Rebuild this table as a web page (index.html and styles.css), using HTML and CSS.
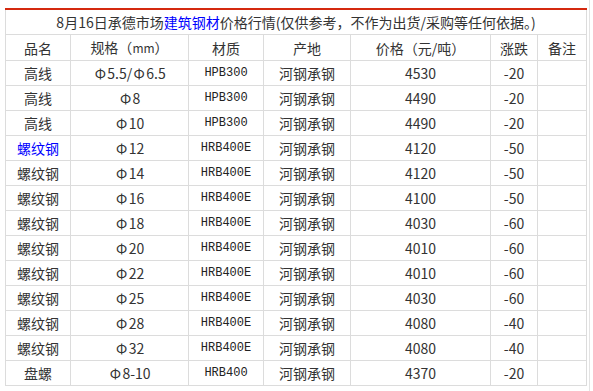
FILE: index.html
```html
<!DOCTYPE html>
<html lang="zh-CN">
<head>
<meta charset="utf-8">
<title>承德市场建筑钢材价格行情</title>
<link rel="stylesheet" href="styles.css">
</head>
<body>
<div class="page">
  <table class="price-table">
    <colgroup>
      <col class="c-name"><col class="c-spec"><col class="c-mat"><col class="c-origin"><col class="c-price"><col class="c-change"><col class="c-note">
    </colgroup>
    <tr class="title-row"><td colspan="7">8月16日承德市场<a class="link" href="#">建筑钢材</a>价格行情(仅供参考，不作为出货/采购等任何依据。)</td></tr>
    <tr><td>品名</td><td>规格（<span class="mm">mm</span>）</td><td>材质</td><td>产地</td><td>价格（元/吨）</td><td>涨跌</td><td>备注</td></tr>
    <tr><td>高线</td><td><span class="phi">Φ</span>5.5/<span class="phi">Φ</span>6.5</td><td class="lat">HPB300</td><td>河钢承钢</td><td>4530</td><td>-20</td><td></td></tr>
    <tr><td>高线</td><td><span class="phi">Φ</span>8</td><td class="lat">HPB300</td><td>河钢承钢</td><td>4490</td><td>-20</td><td></td></tr>
    <tr><td>高线</td><td><span class="phi">Φ</span>10</td><td class="lat">HPB300</td><td>河钢承钢</td><td>4490</td><td>-20</td><td></td></tr>
    <tr><td><a class="link" href="#">螺纹钢</a></td><td><span class="phi">Φ</span>12</td><td class="lat">HRB400E</td><td>河钢承钢</td><td>4120</td><td>-50</td><td></td></tr>
    <tr><td>螺纹钢</td><td><span class="phi">Φ</span>14</td><td class="lat">HRB400E</td><td>河钢承钢</td><td>4120</td><td>-50</td><td></td></tr>
    <tr><td>螺纹钢</td><td><span class="phi">Φ</span>16</td><td class="lat">HRB400E</td><td>河钢承钢</td><td>4100</td><td>-50</td><td></td></tr>
    <tr><td>螺纹钢</td><td><span class="phi">Φ</span>18</td><td class="lat">HRB400E</td><td>河钢承钢</td><td>4030</td><td>-60</td><td></td></tr>
    <tr><td>螺纹钢</td><td><span class="phi">Φ</span>20</td><td class="lat">HRB400E</td><td>河钢承钢</td><td>4010</td><td>-60</td><td></td></tr>
    <tr><td>螺纹钢</td><td><span class="phi">Φ</span>22</td><td class="lat">HRB400E</td><td>河钢承钢</td><td>4010</td><td>-60</td><td></td></tr>
    <tr><td>螺纹钢</td><td><span class="phi">Φ</span>25</td><td class="lat">HRB400E</td><td>河钢承钢</td><td>4030</td><td>-60</td><td></td></tr>
    <tr><td>螺纹钢</td><td><span class="phi">Φ</span>28</td><td class="lat">HRB400E</td><td>河钢承钢</td><td>4080</td><td>-40</td><td></td></tr>
    <tr><td>螺纹钢</td><td><span class="phi">Φ</span>32</td><td class="lat">HRB400E</td><td>河钢承钢</td><td>4080</td><td>-40</td><td></td></tr>
    <tr><td>盘螺</td><td><span class="phi">Φ</span>8-10</td><td class="lat">HRB400</td><td>河钢承钢</td><td>4370</td><td>-20</td><td></td></tr>
  </table>
</div>
</body>
</html>
```
FILE: styles.css
```css
html, body {
  margin: 0;
  padding: 0;
  background: #fff;
}
.page {
  width: 590px;
  height: 391px;
  box-sizing: border-box;
  border-right: 1px solid #e3e3e3;
  padding: 8px 0 0 5px;
}
.price-table {
  width: 581px;
  table-layout: fixed;
  border-collapse: collapse;
  border-top: 2px solid #d4290f;
  font-family: "Noto Sans CJK SC", "Noto Sans", sans-serif;
  font-size: 14px;
  color: #333;
}
.c-name { width: 65px; }
.c-spec { width: 118px; }
.c-mat { width: 75px; }
.c-origin { width: 87px; }
.c-price { width: 140px; }
.c-change { width: 47px; }
.c-note { width: 49px; }
.price-table td {
  border: 1px solid #dcdcdc;
  height: 24px;
  padding: 0;
  text-align: center;
  line-height: 24px;
  white-space: nowrap;
  overflow: hidden;
}
.price-table .title-row td {
  border-top: 2px solid #d4290f;
  height: 23px;
}
.link {
  color: #0000ff;
  text-decoration: none;
}
.phi {
  display: inline-block;
  width: 14px;
  text-align: center;
}
.lat {
  font-family: "Liberation Mono", "Noto Sans CJK SC", monospace;
  font-size: 12px;
  color: #222;
}
.mm {
  font-size: 12px;
}
```
